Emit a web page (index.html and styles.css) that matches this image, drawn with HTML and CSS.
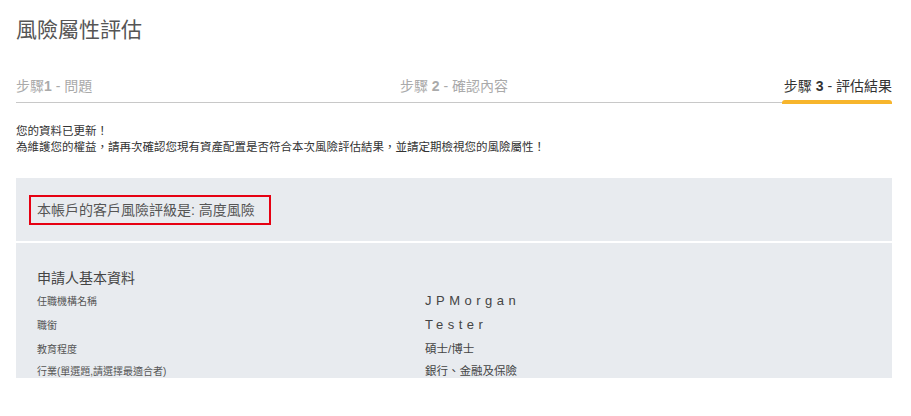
FILE: index.html
```html
<!DOCTYPE html>
<html lang="zh-Hant">
<head>
    <meta charset="UTF-8">
    <meta name="viewport" content="width=device-width, initial-scale=1.0">
    <title>風險屬性評估</title>
    <link rel="stylesheet" href="styles.css">
</head>
<body>
    <section class="page">
        <h1 class="page-title">風險屬性評估</h1>

        <!-- 步驟列 -->
        <div class="steps">
            <div class="step">步驟<b>1</b> - 問題</div>
            <div class="step">步驟 <b>2</b> - 確認內容</div>
            <div class="step active">步驟 <b>3</b> - 評估結果</div>
        </div>

        <div class="notice">
            <p>您的資料已更新！</p>
            <p>為維護您的權益，請再次確認您現有資產配置是否符合本次風險評估結果，並請定期檢視您的風險屬性！</p>
        </div>

        <div class="result">
            <div class="result-top">
                <div class="risk-level">本帳戶的客戶風險評級是: 高度風險</div>
            </div>
            <div class="result-info">
                <h3 class="info-title">申請人基本資料</h3>
                <div class="info-row">
                    <span class="label">任職機構名稱</span>
                    <span class="value latin">JPMorgan</span>
                </div>
                <div class="info-row">
                    <span class="label">職銜</span>
                    <span class="value latin">Tester</span>
                </div>
                <div class="info-row">
                    <span class="label">教育程度</span>
                    <span class="value">碩士/博士</span>
                </div>
                <div class="info-row">
                    <span class="label">行業(單選題,請選擇最適合者)</span>
                    <span class="value">銀行、金融及保險</span>
                </div>
            </div>
        </div>
    </section>
</body>
</html>
```

FILE: styles.css
```css
*{
    box-sizing: border-box;
    padding: 0;
    margin: 0;
}
body{
    background-color: #fff;
    font-family: "Liberation Sans", "Noto Sans CJK TC", sans-serif;
    color: #555;
}
.page{
    padding: 16px 19px 0 16px;
}
.page-title{
    font-size: 21px;
    line-height: 28px;
    font-weight: 400;
    color: #555;
}
.steps{
    margin-top: 32px;
    display: grid;
    grid-template-columns: 1fr 1fr 1fr;
    border-bottom: 1px solid #c8c8c8;
}
.step{
    position: relative;
    font-size: 14px;
    line-height: 20px;
    padding-bottom: 6px;
    color: #aaa;
}
.step:nth-child(2){
    justify-self: center;
}
.step b{
    font-weight: 700;
}
.step.active{
    justify-self: end;
    color: #333;
    padding-left: 2px;
}
.step.active::after{
    content: "";
    position: absolute;
    left: 0;
    right: 0;
    bottom: -2px;
    height: 4px;
    border-radius: 3px 3px 0 0;
    background-color: #f7b52c;
}
.notice{
    margin-top: 20px;
    font-size: 11.5px;
    line-height: 16px;
    color: #333;
}
.result{
    margin-top: 23px;
    height: 200px;
    overflow: hidden;
    background-color: #e8ebef;
}
.result-top{
    padding: 17px 13px 16px;
    border-bottom: 2px solid #fff;
}
.risk-level{
    display: inline-block;
    border: 2px solid #e60012;
    padding: 0 14px 0 6px;
    font-size: 14px;
    line-height: 26px;
    color: #555;
}
.result-info{
    padding: 25px 21px 0;
}
.info-title{
    font-size: 14px;
    line-height: 20px;
    font-weight: 400;
    color: #444;
}
.info-row{
    display: grid;
    grid-template-columns: 388px 1fr;
    align-items: center;
    height: 24px;
}
.info-row:last-child{
    height: 20px;
}
.label{
    font-size: 10px;
    color: #555;
}
.value{
    font-size: 11.5px;
    color: #444;
}
.value.latin{
    font-size: 13px;
    letter-spacing: 4.5px;
}
```
